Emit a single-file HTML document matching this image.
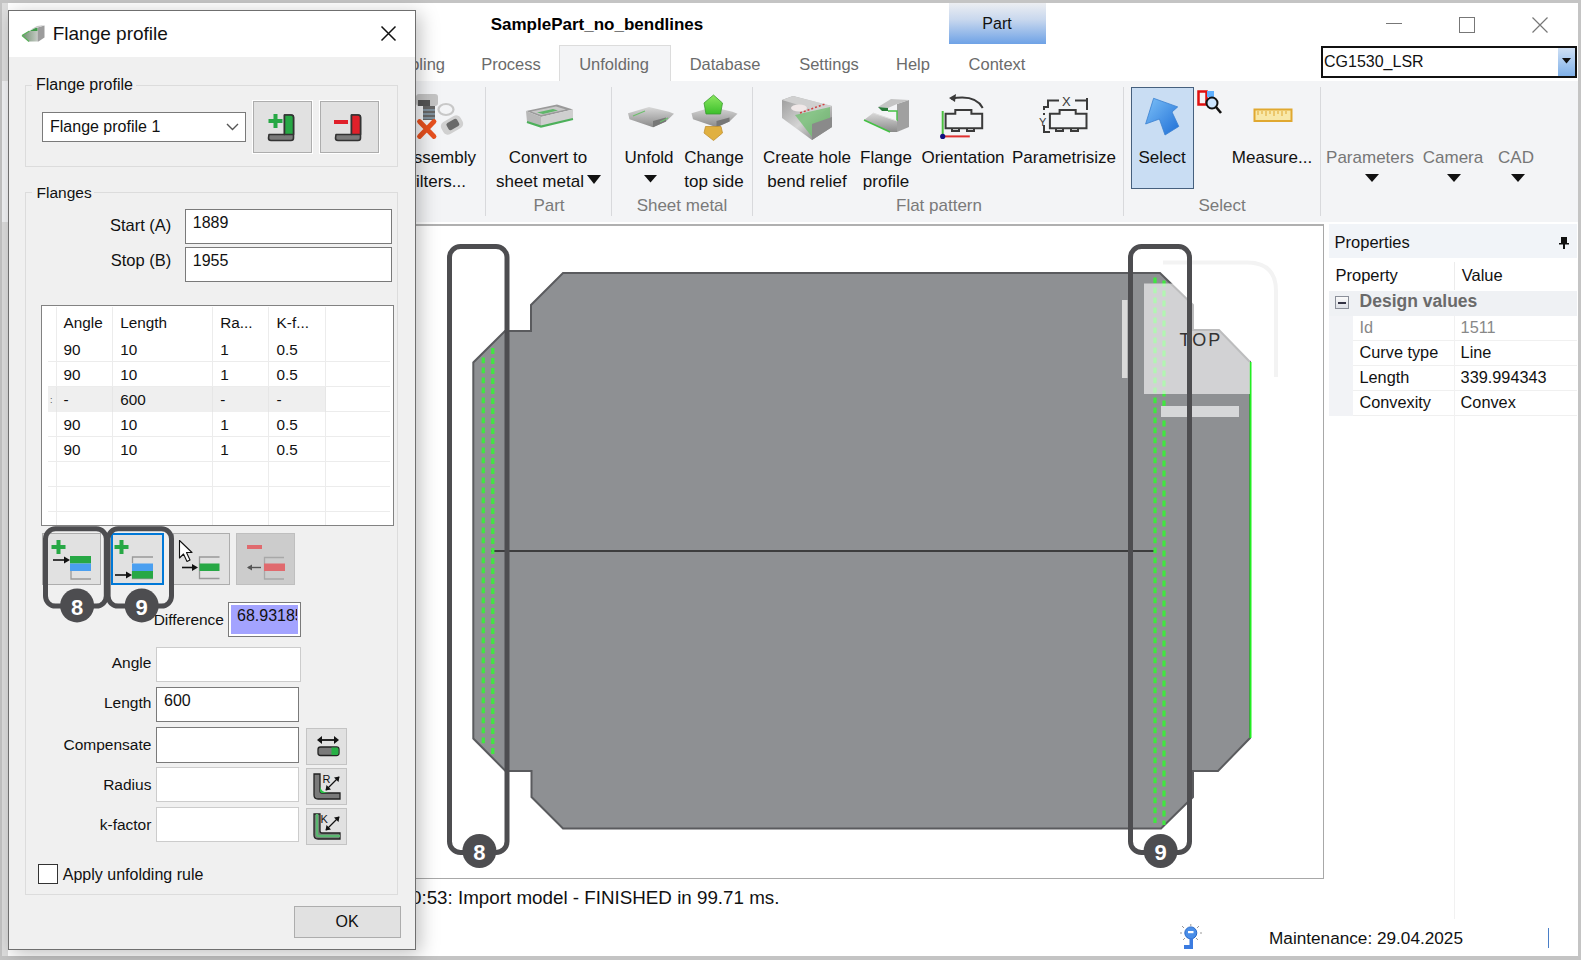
<!DOCTYPE html><html><head><meta charset="utf-8"><style>
html,body{margin:0;padding:0;}
body{width:1581px;height:960px;position:relative;overflow:hidden;background:#c4c4c4;font-family:"Liberation Sans",sans-serif;}
.t{position:absolute;line-height:1;white-space:pre;}
svg{position:absolute;overflow:visible;}
</style></head><body>

<div style="position:absolute;left:2px;top:3px;width:1576px;height:953px;background:#ffffff;"></div>
<div style="position:absolute;left:2px;top:3px;width:6px;height:953px;background:#dedede;"></div>
<div class="t" style="left:97px;width:1000px;text-align:center;top:15.55px;font-size:17px;color:#000;font-weight:bold;">SamplePart_no_bendlines</div>
<div style="position:absolute;left:949px;top:3px;width:97px;height:41px;background:linear-gradient(#eceef2,#c9d8ee 40%,#6ea2e6);"></div>
<div class="t" style="left:497px;width:1000px;text-align:center;top:15.80px;font-size:16px;color:#111;font-weight:normal;">Part</div>
<div style="position:absolute;left:1386px;top:23px;width:16px;height:1px;background:#777;"></div>
<div style="position:absolute;left:1459px;top:17px;width:14px;height:14px;border:1px solid #777;"></div>
<svg style="left:1532px;top:17px" width="16" height="16"><path d="M0.5 0.5L15.5 15.5M15.5 0.5L0.5 15.5" stroke="#777" stroke-width="1.2"/></svg>
<div style="position:absolute;left:2px;top:80.5px;width:1576px;height:1px;background:#dcdcdc;"></div>
<div style="position:absolute;left:559px;top:45px;width:112px;height:36px;background:#f3f4f6;border:1px solid #dcdcdc;border-bottom:none;box-sizing:border-box;"></div>
<div class="t" style="right:1136px;top:56.38px;font-size:16.5px;color:#6b6b6b;font-weight:normal;">Tooling</div>
<div class="t" style="left:11px;width:1000px;text-align:center;top:56.38px;font-size:16.5px;color:#6b6b6b;font-weight:normal;">Process</div>
<div class="t" style="left:114px;width:1000px;text-align:center;top:56.38px;font-size:16.5px;color:#6b6b6b;font-weight:normal;">Unfolding</div>
<div class="t" style="left:225px;width:1000px;text-align:center;top:56.38px;font-size:16.5px;color:#6b6b6b;font-weight:normal;">Database</div>
<div class="t" style="left:329px;width:1000px;text-align:center;top:56.38px;font-size:16.5px;color:#6b6b6b;font-weight:normal;">Settings</div>
<div class="t" style="left:413px;width:1000px;text-align:center;top:56.38px;font-size:16.5px;color:#6b6b6b;font-weight:normal;">Help</div>
<div class="t" style="left:497px;width:1000px;text-align:center;top:56.38px;font-size:16.5px;color:#6b6b6b;font-weight:normal;">Context</div>
<div style="position:absolute;left:1321px;top:46px;width:256px;height:32px;background:#fff;border:2px solid #111;box-sizing:border-box;"></div>
<div style="position:absolute;left:1558px;top:48px;width:17px;height:28px;background:linear-gradient(#cfe0f5,#7fb0e8);"></div>
<svg style="left:1562px;top:58px" width="9" height="6"><path d="M0 0H9L4.5 5.5Z" fill="#111"/></svg>
<div class="t" style="left:1324px;top:53.90px;font-size:16px;color:#111;font-weight:normal;">CG1530_LSR</div>
<div style="position:absolute;left:2px;top:81px;width:1576px;height:141px;background:#f3f4f6;"></div>
<div style="position:absolute;left:415px;top:223px;width:909px;height:1px;background:#ffffff;"></div>
<div style="position:absolute;left:485px;top:87px;width:1px;height:129px;background:#d8d9dc;"></div>
<div style="position:absolute;left:611px;top:87px;width:1px;height:129px;background:#d8d9dc;"></div>
<div style="position:absolute;left:752px;top:87px;width:1px;height:129px;background:#d8d9dc;"></div>
<div style="position:absolute;left:1123px;top:87px;width:1px;height:129px;background:#d8d9dc;"></div>
<div style="position:absolute;left:1320px;top:87px;width:1px;height:129px;background:#d8d9dc;"></div>
<div class="t" style="right:1105px;top:148.75px;font-size:17px;color:#111;font-weight:normal;">Assembly</div>
<div class="t" style="right:1115px;top:172.55px;font-size:17px;color:#111;font-weight:normal;">filters...</div>
<div class="t" style="left:48px;width:1000px;text-align:center;top:148.75px;font-size:17px;color:#111;font-weight:normal;">Convert to</div>
<div class="t" style="left:40px;width:1000px;text-align:center;top:172.55px;font-size:17px;color:#111;font-weight:normal;">sheet metal</div>
<svg style="left:587px;top:174.5px" width="14" height="9"><path d="M0 0H14L7 9Z" fill="#111"/></svg>
<div class="t" style="left:49px;width:1000px;text-align:center;top:196.55px;font-size:17px;color:#7a7a7a;font-weight:normal;">Part</div>
<div class="t" style="left:149px;width:1000px;text-align:center;top:148.75px;font-size:17px;color:#111;font-weight:normal;">Unfold</div>
<svg style="left:644px;top:175px" width="13" height="8"><path d="M0 0H13L6.5 7.5Z" fill="#111"/></svg>
<div class="t" style="left:214px;width:1000px;text-align:center;top:148.75px;font-size:17px;color:#111;font-weight:normal;">Change</div>
<div class="t" style="left:214px;width:1000px;text-align:center;top:172.55px;font-size:17px;color:#111;font-weight:normal;">top side</div>
<div class="t" style="left:182px;width:1000px;text-align:center;top:196.55px;font-size:17px;color:#7a7a7a;font-weight:normal;">Sheet metal</div>
<div class="t" style="left:307px;width:1000px;text-align:center;top:148.75px;font-size:17px;color:#111;font-weight:normal;">Create hole</div>
<div class="t" style="left:307px;width:1000px;text-align:center;top:172.55px;font-size:17px;color:#111;font-weight:normal;">bend relief</div>
<div class="t" style="left:386px;width:1000px;text-align:center;top:148.75px;font-size:17px;color:#111;font-weight:normal;">Flange</div>
<div class="t" style="left:386px;width:1000px;text-align:center;top:172.55px;font-size:17px;color:#111;font-weight:normal;">profile</div>
<div class="t" style="left:463px;width:1000px;text-align:center;top:148.75px;font-size:17px;color:#111;font-weight:normal;">Orientation</div>
<div class="t" style="left:564px;width:1000px;text-align:center;top:148.75px;font-size:17px;color:#111;font-weight:normal;">Parametrisize</div>
<div class="t" style="left:439px;width:1000px;text-align:center;top:196.55px;font-size:17px;color:#7a7a7a;font-weight:normal;">Flat pattern</div>
<div style="position:absolute;left:1131px;top:87px;width:63px;height:102px;background:#c9ddf3;border:1.5px solid #46607e;box-sizing:border-box;"></div>
<div class="t" style="left:662px;width:1000px;text-align:center;top:148.75px;font-size:17px;color:#111;font-weight:normal;">Select</div>
<div class="t" style="left:772px;width:1000px;text-align:center;top:148.75px;font-size:17px;color:#111;font-weight:normal;">Measure...</div>
<div class="t" style="left:722px;width:1000px;text-align:center;top:196.55px;font-size:17px;color:#7a7a7a;font-weight:normal;">Select</div>
<div class="t" style="left:870px;width:1000px;text-align:center;top:148.75px;font-size:17px;color:#777;font-weight:normal;">Parameters</div>
<div class="t" style="left:953px;width:1000px;text-align:center;top:148.75px;font-size:17px;color:#777;font-weight:normal;">Camera</div>
<div class="t" style="left:1016px;width:1000px;text-align:center;top:148.75px;font-size:17px;color:#777;font-weight:normal;">CAD</div>
<svg style="left:1365px;top:174px" width="14" height="9"><path d="M0 0H14L7 8Z" fill="#111"/></svg>
<svg style="left:1447px;top:174px" width="14" height="9"><path d="M0 0H14L7 8Z" fill="#111"/></svg>
<svg style="left:1511px;top:174px" width="14" height="9"><path d="M0 0H14L7 8Z" fill="#111"/></svg>
<div style="position:absolute;left:415px;top:224px;width:909px;height:655px;background:#fff;border:1px solid #a8a8a8;border-top:2px solid #b0b0b0;box-sizing:border-box;"></div>
<svg style="left:0;top:0" width="1581" height="960">
<path d="M563 273 H1160 L1193 305 V330 H1219 L1250 362 V738 L1218 771 H1193 V797 L1161 828.5 H563 L531.5 797 V771 H505.5 L473.3 738.5 V362.5 L505 331 H531 V305 Z" fill="#8e9093" stroke="#5a5b5e" stroke-width="2"/>
<line x1="491" y1="551" x2="1155.6" y2="551" stroke="#222" stroke-width="1.5"/>
<path d="M483.3 357.5 V745 M492.8 348.1 V754" stroke="#3fe83f" stroke-width="3.2" stroke-dasharray="5.8 4.2"/>
<path d="M1155 277.5 V823 M1164 280.6 V825" stroke="#3fe83f" stroke-width="3.2" stroke-dasharray="5.8 4.2"/>
<path d="M1250.5 362 V738" stroke="#22ee22" stroke-width="2"/>
<path d="M1163 262.5 H1247 Q1276 262.5 1276 291 V377" fill="none" stroke="#f3f3f3" stroke-width="4"/>
<rect x="1144" y="283.5" width="106" height="110.5" fill="#ffffff" fill-opacity="0.6"/>
<rect x="1122" y="300" width="5.5" height="78" fill="#dadada"/>
<rect x="1161" y="406" width="78" height="11" fill="#d6d7d9"/>
<text x="1179.5" y="345.5" font-family="Liberation Sans" font-size="18" fill="#333" letter-spacing="2">TOP</text>
<rect x="449.5" y="246.5" width="57.5" height="606" rx="11" fill="none" stroke="#4d4d50" stroke-width="5"/>
<rect x="1130.5" y="246.5" width="59" height="606" rx="11" fill="none" stroke="#4d4d50" stroke-width="5"/>
<circle cx="479.4" cy="851" r="17" fill="#4d4d50"/>
<circle cx="1160.6" cy="851" r="17" fill="#4d4d50"/>
<text x="479.4" y="860.3" text-anchor="middle" font-family="Liberation Sans" font-weight="bold" font-size="22" fill="#fff">8</text>
<text x="1160.6" y="860.3" text-anchor="middle" font-family="Liberation Sans" font-weight="bold" font-size="22" fill="#fff">9</text>
</svg>
<div style="position:absolute;left:1329px;top:224px;width:248px;height:34px;background:#f1f4f8;"></div>
<div class="t" style="left:1334.6px;top:234.07px;font-size:16.5px;color:#111;font-weight:normal;">Properties</div>
<svg style="left:1558px;top:236px" width="12" height="14"><path d="M3 1H9V7H11V8.5H7V13H5V8.5H1V7H3Z" fill="#111"/></svg>
<div style="position:absolute;left:1329px;top:258px;width:248px;height:33px;background:#fff;"></div>
<div style="position:absolute;left:1454px;top:262px;width:1px;height:28px;background:#ececec;"></div>
<div class="t" style="left:1335.5px;top:267.18px;font-size:16.5px;color:#111;font-weight:normal;">Property</div>
<div class="t" style="left:1461.7px;top:267.18px;font-size:16.5px;color:#111;font-weight:normal;">Value</div>
<div style="position:absolute;left:1329px;top:291px;width:248px;height:25px;background:#eff1f4;"></div>
<div style="position:absolute;left:1329px;top:316px;width:24px;height:100px;background:#f2f3f6;"></div>
<div style="position:absolute;left:1335px;top:296px;width:14px;height:13px;border:1px solid #8a8f99;box-sizing:border-box;background:linear-gradient(#fafafa,#dde0e6);"></div>
<div style="position:absolute;left:1338px;top:302px;width:8px;height:1.5px;background:#334;"></div>
<div class="t" style="left:1359.6px;top:293.12px;font-size:17.5px;color:#6a6a6a;font-weight:bold;">Design values</div>
<div style="position:absolute;left:1353px;top:340px;width:224px;height:1px;background:#f0f0f0;"></div>
<div class="t" style="left:1359.5px;top:318.64px;font-size:16.3px;color:#888;font-weight:normal;">Id</div>
<div class="t" style="left:1460.6px;top:318.64px;font-size:16.3px;color:#888;font-weight:normal;">1511</div>
<div style="position:absolute;left:1353px;top:365px;width:224px;height:1px;background:#f0f0f0;"></div>
<div class="t" style="left:1359.5px;top:343.64px;font-size:16.3px;color:#111;font-weight:normal;">Curve type</div>
<div class="t" style="left:1460.6px;top:343.64px;font-size:16.3px;color:#111;font-weight:normal;">Line</div>
<div style="position:absolute;left:1353px;top:390px;width:224px;height:1px;background:#f0f0f0;"></div>
<div class="t" style="left:1359.5px;top:368.64px;font-size:16.3px;color:#111;font-weight:normal;">Length</div>
<div class="t" style="left:1460.6px;top:368.64px;font-size:16.3px;color:#111;font-weight:normal;">339.994343</div>
<div style="position:absolute;left:1353px;top:415px;width:224px;height:1px;background:#f0f0f0;"></div>
<div class="t" style="left:1359.5px;top:393.64px;font-size:16.3px;color:#111;font-weight:normal;">Convexity</div>
<div class="t" style="left:1460.6px;top:393.64px;font-size:16.3px;color:#111;font-weight:normal;">Convex</div>
<div style="position:absolute;left:1454px;top:316px;width:1px;height:603px;background:#f1f1f1;"></div>
<svg style="left:0;top:0" width="1581" height="960">
<defs>
<linearGradient id="gmet" x1="0" y1="0" x2="0" y2="1"><stop offset="0" stop-color="#d8d8d8"/><stop offset="1" stop-color="#8a8a8a"/></linearGradient>
<linearGradient id="gmet2" x1="0" y1="0" x2="1" y2="1"><stop offset="0" stop-color="#9a9a9a"/><stop offset="0.5" stop-color="#d4d4d4"/><stop offset="1" stop-color="#6e6e6e"/></linearGradient>
<linearGradient id="gblue" x1="0" y1="0" x2="1" y2="1"><stop offset="0" stop-color="#7cc0f8"/><stop offset="1" stop-color="#1f6fd6"/></linearGradient>
<linearGradient id="ggreen" x1="0" y1="0" x2="0" y2="1"><stop offset="0" stop-color="#8ce860"/><stop offset="1" stop-color="#3cbf2c"/></linearGradient>
</defs>
<!-- assembly filters partial -->
<rect x="416" y="94" width="22" height="12" rx="3" fill="#c4c4c4"/>
<rect x="418" y="100" width="12" height="6" fill="#555"/>
<rect x="423" y="106" width="12" height="14" fill="#666"/>
<path d="M423 110H435 M423 114H435 M423 118H435" stroke="#8aa0b0" stroke-width="1.4"/>
<ellipse cx="446" cy="109.5" rx="7.5" ry="5.5" fill="none" stroke="#c8c8c8" stroke-width="2.2"/>
<g transform="rotate(-30 452 125)"><rect x="441" y="118" width="22" height="14" rx="5" fill="#d0d0d0"/><rect x="447" y="121" width="12" height="8" rx="2" fill="#6a6a6a"/></g>
<path d="M419.5 121.5L434 136.5M434 121.5L419.5 136.5" stroke="#e8501e" stroke-width="4.8" stroke-linecap="round"/>
<!-- convert to sheet metal -->
<path d="M526 111L557 104.5L573 109.5L541 117Z" fill="#9a9a9a"/>
<path d="M531 111.5L556 106.5L566 109.5L541 115Z" fill="#c8c8c8"/>
<path d="M537 112.5L553 109L558 110.5L543 114Z" fill="#5fb66a"/>
<path d="M526 111L541 117V126.5L527 122Z" fill="#b8b8b8"/>
<path d="M541 117L573 109.5V119L541 126.5Z" fill="#cfcfcf"/>
<path d="M527 122L541 126.5L573 119" stroke="#4cb05a" stroke-width="2.2" fill="none"/>
<!-- unfold -->
<path d="M628 113.3L649 107L669 111.7L674 113.7L666 121.6L653 127.2L629.5 119.2Z" fill="url(#gmet)"/>
<path d="M653 121L666 117.5V121.6L653 127.2Z" fill="#777"/>
<path d="M633 116L645 111M660 122L668 118" stroke="#6cbf6c" stroke-width="1.2"/>
<!-- change top side -->
<path d="M691.5 113.3L712.5 107L732.5 111.7L737.5 113.7L729.5 121.6L716.5 127.2L693 119.2Z" fill="url(#gmet)"/>
<path d="M716.5 121L729.5 117.5V121.6L716.5 127.2Z" fill="#777"/>
<path d="M713.5 95L722.5 103L720.5 114H706L704 103Z" fill="url(#ggreen)" stroke="#3a9a30" stroke-width="0.8" stroke-linejoin="round"/>
<path d="M705.5 126.5H721L722.5 133L713.5 140.5L704 133Z" fill="#e0b040" stroke="#c09030" stroke-width="0.8" stroke-linejoin="round"/>
<!-- create hole bend relief -->
<path d="M782 100L793 96L832 106V127L812 140L782 118Z" fill="url(#gmet2)"/>
<path d="M782 100L793 96L832 106L822 112Z" fill="#d0d0d0"/>
<path d="M795 115L830 107V126L812 137Z" fill="#6fbf6f" opacity="0.75"/>
<ellipse cx="799" cy="108" rx="8" ry="3.5" fill="#f0e8e8"/>
<path d="M800 113L825 104" stroke="#d04040" stroke-width="1.5" stroke-dasharray="2 2"/>
<path d="M812 124L832 117V127L812 140Z" fill="#8a8a8a"/>
<!-- flange profile -->
<path d="M864 120L873 113L897 121V132L890 132Z" fill="url(#gmet)"/>
<path d="M864 120L890 132" stroke="#44c044" stroke-width="1.6"/>
<path d="M897 121V104L909 100V127L897 132Z" fill="#a0a0a0"/>
<path d="M878 107L891 99L909 100L897 104L888 108Z" fill="#c4c4c4"/>
<path d="M878 107L888 108V111L882 111Z" fill="#2a7a3a"/>
<path d="M888 111H897V121" stroke="#44c044" stroke-width="1.4" fill="none"/>
<path d="M873 113L897 121" stroke="#ddd" stroke-width="1"/>
<!-- orientation -->
<g fill="none" stroke="#3a3a3a" stroke-width="2">
<path d="M945.6 113.8H955.3V110H971.4V113.8H982.2V128.3H945.6Z"/>
<path d="M952 128.3V131H959V128.3M967 128.3V131H974V128.3"/>
<path d="M982.7 107.9Q975 94 951 98.8"/>
</g>
<path d="M949 98L956 94L955 102Z" fill="#3a3a3a"/>
<path d="M942.7 111V136.4" stroke="#4cc040" stroke-width="2"/>
<path d="M943 136.4H969.8" stroke="#e03030" stroke-width="2"/>
<circle cx="942.7" cy="136.4" r="2.6" fill="#101080"/>
<!-- parametrisize -->
<g fill="none" stroke="#3a3a3a" stroke-width="2">
<path d="M1049.9 113.8H1059.6V110H1075.7V113.8H1086.5V128.3H1049.9Z"/>
<path d="M1056 128.3V131H1063V128.3M1071 128.3V131H1078V128.3"/>
<path d="M1044 110V107H1048V100.5H1059 M1075 100.5H1087 M1087 98V110"/>
<path d="M1044 113V115 M1044 125V132H1050"/>
</g>
<text x="1062" y="106" font-family="Liberation Sans" font-size="13" fill="#3a3a3a">X</text>
<text x="1039" y="126" font-family="Liberation Sans" font-size="11" fill="#3a3a3a">Y</text>
<!-- select arrow -->
<path d="M1153.6 98.3L1177.7 106.9L1172 112L1178.8 126.4L1165 135L1159.4 119L1145.6 124Z" fill="url(#gblue)" stroke="#3a80d0" stroke-width="0.8" stroke-linejoin="round"/>
<!-- zoom icon -->
<rect x="1198.5" y="91.5" width="8" height="13" fill="none" stroke="#e01010" stroke-width="2.5"/>
<rect x="1207" y="91" width="7" height="6" fill="#60b0ff"/>
<circle cx="1212" cy="103" r="5.5" fill="#cde6ff" stroke="#111" stroke-width="2"/>
<path d="M1216 107L1221 113" stroke="#111" stroke-width="2.6"/>
<!-- ruler -->
<rect x="1254.5" y="109.5" width="37" height="11.5" fill="#f8e8a8" stroke="#e0a830" stroke-width="2"/>
<path d="M1258 111V115M1262 111V114M1266 111V116M1270 111V114M1274 111V116M1278 111V114M1282 111V116M1286 111V114" stroke="#e0a830" stroke-width="1"/>
<!-- key status icon -->
<circle cx="1190.8" cy="932.9" r="6" fill="#4a8ee8" stroke="#2a6ac8" stroke-width="1"/>
<rect x="1188" y="931" width="5.5" height="2.2" fill="#fff"/>
<path d="M1189.5 938H1193V949H1184V945H1189.5Z" fill="#3b7be0"/>
<path d="M1182 926L1184 928M1190.8 924V926M1199 926L1197 928M1180 933H1182M1200 933H1202M1183 940L1185 938M1198 940L1196 938" stroke="#999" stroke-width="1"/>
</svg>
<div class="t" style="left:411px;top:889.32px;font-size:18.8px;color:#111;font-weight:normal;">0:53: Import model - FINISHED in 99.71 ms.</div>
<div class="t" style="left:1269px;top:930.38px;font-size:17.2px;color:#111;font-weight:normal;">Maintenance: 29.04.2025</div>
<div style="position:absolute;left:1548px;top:928px;width:1px;height:20px;background:#4a7fc8;"></div>
<div style="position:absolute;left:8px;top:10px;width:408px;height:940px;box-shadow:4px 4px 18px rgba(0,0,0,0.25);"></div>
<div style="position:absolute;left:8px;top:10px;width:408px;height:940px;background:#f0f0f0;border:1px solid #6f6f6f;box-sizing:border-box;"></div>
<div style="position:absolute;left:9px;top:11px;width:406px;height:46px;background:#fff;"></div>
<div class="t" style="left:52.7px;top:24.15px;font-size:19px;color:#111;font-weight:normal;">Flange profile</div>
<svg style="left:381px;top:26px" width="15" height="15"><path d="M0.5 0.5L14.5 14.5M14.5 0.5L0.5 14.5" stroke="#111" stroke-width="1.5"/></svg>
<div style="position:absolute;left:25px;top:85px;width:373px;height:82px;border:1px solid #dcdcdc;box-sizing:border-box;"></div>
<div style="position:absolute;left:32px;top:76px;width:104px;height:16px;background:#f0f0f0;"></div>
<div class="t" style="left:36px;top:76.90px;font-size:16px;color:#111;font-weight:normal;">Flange profile</div>
<div style="position:absolute;left:42px;top:112px;width:204px;height:30px;background:#fff;border:1px solid #7a7a7a;box-sizing:border-box;"></div>
<div class="t" style="left:50px;top:119.00px;font-size:16px;color:#111;font-weight:normal;">Flange profile 1</div>
<svg style="left:226px;top:123px" width="13" height="8"><path d="M1 1L6.5 6.5L12 1" stroke="#555" stroke-width="1.4" fill="none"/></svg>
<div style="position:absolute;left:253px;top:101px;width:59px;height:52px;background:#e1e1e1;border:1px solid #adadad;box-sizing:border-box;box-shadow:0 0 0 1px #fff;"></div>
<div style="position:absolute;left:320px;top:101px;width:59px;height:52px;background:#e1e1e1;border:1px solid #adadad;box-sizing:border-box;box-shadow:0 0 0 1px #fff;"></div>
<div style="position:absolute;left:25px;top:192px;width:373px;height:703px;border:1px solid #dcdcdc;box-sizing:border-box;"></div>
<div style="position:absolute;left:32px;top:183px;width:62px;height:16px;background:#f0f0f0;"></div>
<div class="t" style="left:36.5px;top:184.52px;font-size:15.5px;color:#111;font-weight:normal;">Flanges</div>
<div class="t" style="right:1409.7px;top:216.57px;font-size:16.5px;color:#111;font-weight:normal;">Start (A)</div>
<div style="position:absolute;left:185px;top:209px;width:207px;height:35px;background:#fff;border:1px solid #7a7a7a;box-sizing:border-box;"></div>
<div class="t" style="left:192.8px;top:215.10px;font-size:16px;color:#111;font-weight:normal;">1889</div>
<div class="t" style="right:1409.7px;top:251.97px;font-size:16.5px;color:#111;font-weight:normal;">Stop (B)</div>
<div style="position:absolute;left:185px;top:247px;width:207px;height:35px;background:#fff;border:1px solid #7a7a7a;box-sizing:border-box;"></div>
<div class="t" style="left:192.8px;top:252.90px;font-size:16px;color:#111;font-weight:normal;">1955</div>
<div style="position:absolute;left:41px;top:305px;width:353px;height:221px;background:#fff;border:1px solid #828282;box-sizing:border-box;"></div>
<div style="position:absolute;left:56px;top:307px;width:1px;height:218px;background:#ececec;"></div>
<div style="position:absolute;left:112px;top:307px;width:1px;height:218px;background:#ececec;"></div>
<div style="position:absolute;left:212px;top:307px;width:1px;height:218px;background:#ececec;"></div>
<div style="position:absolute;left:268px;top:307px;width:1px;height:218px;background:#ececec;"></div>
<div style="position:absolute;left:325px;top:307px;width:1px;height:218px;background:#ececec;"></div>
<div style="position:absolute;left:41px;top:305px;width:353px;height:221px;border:1px solid #828282;box-sizing:border-box;"></div>
<div style="position:absolute;left:48px;top:361px;width:342px;height:1px;background:#ececec;"></div>
<div style="position:absolute;left:48px;top:386px;width:342px;height:1px;background:#ececec;"></div>
<div style="position:absolute;left:48px;top:411px;width:342px;height:1px;background:#ececec;"></div>
<div style="position:absolute;left:48px;top:436px;width:342px;height:1px;background:#ececec;"></div>
<div style="position:absolute;left:48px;top:461px;width:342px;height:1px;background:#ececec;"></div>
<div style="position:absolute;left:48px;top:486px;width:342px;height:1px;background:#ececec;"></div>
<div style="position:absolute;left:48px;top:511px;width:342px;height:1px;background:#ececec;"></div>
<div style="position:absolute;left:48px;top:387px;width:277px;height:25px;background:#efefef;"></div>
<div style="position:absolute;left:56px;top:387px;width:1px;height:25px;background:#e6e6e6;"></div>
<div style="position:absolute;left:112px;top:387px;width:1px;height:25px;background:#e6e6e6;"></div>
<div style="position:absolute;left:212px;top:387px;width:1px;height:25px;background:#e6e6e6;"></div>
<div style="position:absolute;left:268px;top:387px;width:1px;height:25px;background:#e6e6e6;"></div>
<div style="position:absolute;left:325px;top:387px;width:1px;height:25px;background:#e6e6e6;"></div>
<div class="t" style="left:63.6px;top:314.60px;font-size:15.3px;color:#111;font-weight:normal;">Angle</div>
<div class="t" style="left:120.2px;top:314.60px;font-size:15.3px;color:#111;font-weight:normal;">Length</div>
<div class="t" style="left:220.3px;top:314.60px;font-size:15.3px;color:#111;font-weight:normal;">Ra...</div>
<div class="t" style="left:276.6px;top:314.60px;font-size:15.3px;color:#111;font-weight:normal;">K-f...</div>
<div class="t" style="left:63.6px;top:342.39px;font-size:15.3px;color:#111;font-weight:normal;">90</div>
<div class="t" style="left:120.2px;top:342.39px;font-size:15.3px;color:#111;font-weight:normal;">10</div>
<div class="t" style="left:220.3px;top:342.39px;font-size:15.3px;color:#111;font-weight:normal;">1</div>
<div class="t" style="left:276.6px;top:342.39px;font-size:15.3px;color:#111;font-weight:normal;">0.5</div>
<div class="t" style="left:63.6px;top:367.39px;font-size:15.3px;color:#111;font-weight:normal;">90</div>
<div class="t" style="left:120.2px;top:367.39px;font-size:15.3px;color:#111;font-weight:normal;">10</div>
<div class="t" style="left:220.3px;top:367.39px;font-size:15.3px;color:#111;font-weight:normal;">1</div>
<div class="t" style="left:276.6px;top:367.39px;font-size:15.3px;color:#111;font-weight:normal;">0.5</div>
<div class="t" style="left:63.6px;top:392.39px;font-size:15.3px;color:#111;font-weight:normal;">-</div>
<div class="t" style="left:120.2px;top:392.39px;font-size:15.3px;color:#111;font-weight:normal;">600</div>
<div class="t" style="left:220.3px;top:392.39px;font-size:15.3px;color:#111;font-weight:normal;">-</div>
<div class="t" style="left:276.6px;top:392.39px;font-size:15.3px;color:#111;font-weight:normal;">-</div>
<div class="t" style="left:63.6px;top:417.39px;font-size:15.3px;color:#111;font-weight:normal;">90</div>
<div class="t" style="left:120.2px;top:417.39px;font-size:15.3px;color:#111;font-weight:normal;">10</div>
<div class="t" style="left:220.3px;top:417.39px;font-size:15.3px;color:#111;font-weight:normal;">1</div>
<div class="t" style="left:276.6px;top:417.39px;font-size:15.3px;color:#111;font-weight:normal;">0.5</div>
<div class="t" style="left:63.6px;top:442.39px;font-size:15.3px;color:#111;font-weight:normal;">90</div>
<div class="t" style="left:120.2px;top:442.39px;font-size:15.3px;color:#111;font-weight:normal;">10</div>
<div class="t" style="left:220.3px;top:442.39px;font-size:15.3px;color:#111;font-weight:normal;">1</div>
<div class="t" style="left:276.6px;top:442.39px;font-size:15.3px;color:#111;font-weight:normal;">0.5</div>
<div class="t" style="left:50px;top:396.35px;font-size:9px;color:#555;font-weight:normal;">:</div>
<div style="position:absolute;left:42px;top:533px;width:59px;height:52px;background:#e1e1e1;border:1px solid #adadad;box-sizing:border-box;"></div>
<div style="position:absolute;left:111px;top:533px;width:53px;height:52px;background:#e1e1e1;border:1px solid #0078d7;box-sizing:border-box;"></div>
<div style="position:absolute;left:111px;top:533px;width:53px;height:52px;border:2px solid #0078d7;box-sizing:border-box;"></div>
<div style="position:absolute;left:173px;top:533px;width:57px;height:52px;background:#e1e1e1;border:1px solid #adadad;box-sizing:border-box;"></div>
<div style="position:absolute;left:236px;top:533px;width:59px;height:52px;background:#cccccc;border:1px solid #bfbfbf;box-sizing:border-box;"></div>
<div class="t" style="right:1357px;top:611.83px;font-size:15.5px;color:#111;font-weight:normal;">Difference</div>
<div style="position:absolute;left:228px;top:602px;width:73px;height:35px;background:#a3a3ff;border:1px solid #7a7a7a;box-sizing:border-box;box-shadow:inset 0 0 0 2px #fff;"></div>
<div style="position:absolute;left:231px;top:605px;width:66px;height:29px;overflow:hidden;"><div class="t" style="left:6px;top:2.70px;font-size:16px;color:#111">68.93185</div></div>
<div class="t" style="right:1429.6px;top:654.62px;font-size:15.5px;color:#111;font-weight:normal;">Angle</div>
<div style="position:absolute;left:156px;top:647px;width:145px;height:35px;background:#fff;border:1px solid #cccccc;box-sizing:border-box;"></div>
<div class="t" style="right:1429.6px;top:694.53px;font-size:15.5px;color:#111;font-weight:normal;">Length</div>
<div style="position:absolute;left:156px;top:687px;width:143px;height:35px;background:#fff;border:1px solid #7a7a7a;box-sizing:border-box;"></div>
<div class="t" style="left:164px;top:692.90px;font-size:16px;color:#111;font-weight:normal;">600</div>
<div class="t" style="right:1429.6px;top:736.83px;font-size:15.5px;color:#111;font-weight:normal;">Compensate</div>
<div style="position:absolute;left:156px;top:727px;width:143px;height:36px;background:#fff;border:1px solid #7a7a7a;box-sizing:border-box;"></div>
<div style="position:absolute;left:306px;top:728px;width:41px;height:37px;background:#e1e1e1;border:1px solid #c4c4c4;box-sizing:border-box;"></div>
<div class="t" style="right:1429.6px;top:777.23px;font-size:15.5px;color:#111;font-weight:normal;">Radius</div>
<div style="position:absolute;left:156px;top:767px;width:143px;height:35px;background:#fff;border:1px solid #cccccc;box-sizing:border-box;"></div>
<div style="position:absolute;left:306px;top:768px;width:41px;height:37px;background:#e1e1e1;border:1px solid #c4c4c4;box-sizing:border-box;"></div>
<div class="t" style="right:1429.6px;top:817.12px;font-size:15.5px;color:#111;font-weight:normal;">k-factor</div>
<div style="position:absolute;left:156px;top:807px;width:143px;height:35px;background:#fff;border:1px solid #cccccc;box-sizing:border-box;"></div>
<div style="position:absolute;left:306px;top:808px;width:41px;height:37px;background:#e1e1e1;border:1px solid #c4c4c4;box-sizing:border-box;"></div>
<div style="position:absolute;left:38px;top:864px;width:20px;height:20px;background:#fff;border:1px solid #333;box-sizing:border-box;"></div>
<div class="t" style="left:62.8px;top:866.90px;font-size:16px;color:#111;font-weight:normal;">Apply unfolding rule</div>
<div style="position:absolute;left:294px;top:906px;width:107px;height:32px;background:#e1e1e1;border:1px solid #adadad;box-sizing:border-box;"></div>
<div class="t" style="left:-153px;width:1000px;text-align:center;top:914.10px;font-size:16px;color:#111;font-weight:normal;">OK</div>
<svg style="left:253px;top:101px" width="59" height="52">
<path d="M15.5 20H29.5 M22.5 13V27" stroke="#27a845" stroke-width="4"/>
<path d="M16 33.5 H31.5 V14 H38 Q40.5 14 40.5 16.5 V37 Q40.5 39.5 38 39.5 H18 Q15.5 39.5 15.5 37 Z" fill="#7a7a7a" stroke="#333" stroke-width="1.6" stroke-linejoin="round"/>
<path d="M31.5 14 H38 Q40.5 14 40.5 16.5 V33.5 H31.5 Z" fill="#27a845" stroke="#333" stroke-width="1.6" stroke-linejoin="round"/>
</svg>
<svg style="left:320px;top:101px" width="59" height="52">
<path d="M14 21H28" stroke="#e0202a" stroke-width="4"/>
<path d="M16 33.5 H31.5 V14 H38 Q40.5 14 40.5 16.5 V37 Q40.5 39.5 38 39.5 H18 Q15.5 39.5 15.5 37 Z" fill="#7a7a7a" stroke="#333" stroke-width="1.6" stroke-linejoin="round"/>
<path d="M31.5 14 H38 Q40.5 14 40.5 16.5 V33.5 H31.5 Z" fill="#e0202a" stroke="#333" stroke-width="1.6" stroke-linejoin="round"/>
</svg>
<svg style="left:42px;top:533px" width="59" height="52">
<path d="M9.5 14H23.5 M16.5 7V21" stroke="#27a845" stroke-width="4"/>
<path d="M11 27H24" stroke="#111" stroke-width="1.6"/><path d="M22 23.5L28 27L22 30.5Z" fill="#111"/>
<rect x="28" y="23" width="21" height="7.5" fill="#27a845"/>
<rect x="28" y="30.5" width="21" height="7.5" fill="#4a9ff0"/>
<path d="M49 46H29V38" stroke="#999" stroke-width="1.3" fill="none"/>
</svg>
<svg style="left:111px;top:533px" width="53" height="52">
<path d="M3.5 14H17.5 M10.5 7V21" stroke="#27a845" stroke-width="4"/>
<path d="M42 24H21.5V30 M21.5 38V45.5H42" stroke="#999" stroke-width="1.3" fill="none"/>
<rect x="21" y="30.5" width="21" height="7.5" fill="#4a9ff0"/>
<rect x="21" y="38" width="21" height="7.5" fill="#27a845"/>
<path d="M4 42H17" stroke="#111" stroke-width="1.6"/><path d="M15 38.5L21 42L15 45.5Z" fill="#111"/>
</svg>
<svg style="left:173px;top:533px" width="57" height="52">
<path d="M46.5 24H26.5V45.5H46.5" stroke="#999" stroke-width="1.3" fill="none"/>
<rect x="26.5" y="30.5" width="20" height="7.5" fill="#27a845"/>
<path d="M9 34.5H21" stroke="#111" stroke-width="1.6"/><path d="M19 31L25 34.5L19 38Z" fill="#111"/>
</svg>
<svg style="left:236px;top:533px" width="59" height="52">
<rect x="11" y="12" width="15" height="4" fill="#e06a6e"/>
<path d="M48 24.5H28.5V46H48" stroke="#a8a8a8" stroke-width="1.3" fill="none"/>
<rect x="28" y="30.5" width="21" height="7.5" fill="#e06a6e"/>
<path d="M12 34.5H25" stroke="#555" stroke-width="1.4"/><path d="M16 31.5L11 34.5L16 37.5Z" fill="#555"/>
</svg>
<svg style="left:306px;top:728px" width="41" height="37">
<path d="M15 12H29" stroke="#111" stroke-width="1.8"/><path d="M16 8L11 12L16 16Z M28 8L33 12L28 16Z" fill="#111"/>
<rect x="12" y="19" width="21" height="8.5" rx="2.5" fill="#7a7a7a" stroke="#222" stroke-width="1.3"/>
<path d="M25.5 19.6H31 Q32.4 19.6 32.4 21V25.6 Q32.4 27 31 27H25.5Z" fill="#27b045"/>
</svg>
<svg style="left:306px;top:768px" width="41" height="37">
<path d="M8 6V27 Q8 31 12 31H34V25H16 Q14 25 14 23V6Z" fill="#7a7a7a" stroke="#222" stroke-width="1.3"/>
<path d="M14 18 Q15 25 23 25H16Q14 25 14 23Z" fill="#27c045"/>
<text x="16.5" y="15" font-family="Liberation Sans" font-size="11" fill="#111">R</text>
<path d="M20 22L33 9" stroke="#111" stroke-width="1.3"/><path d="M33.5 8.5L28 9.5L32.5 14Z M19.5 22.5L25 21.5L20.5 17Z" fill="#111"/>
</svg>
<svg style="left:306px;top:808px" width="41" height="37">
<path d="M8 6V27 Q8 31 12 31H34V25H16 Q14 25 14 23V6Z" fill="#7a7a7a" stroke="#222" stroke-width="1.3"/>
<path d="M11 6V26 Q11 28 13 28H34" stroke="#5ab870" stroke-width="2.4" fill="none"/>
<text x="14.5" y="15" font-family="Liberation Sans" font-size="11" fill="#111">K</text>
<path d="M20 22L33 9" stroke="#111" stroke-width="1.3"/><path d="M33.5 8.5L28 9.5L32.5 14Z M19.5 22.5L25 21.5L20.5 17Z" fill="#111"/>
</svg>
<svg style="left:0;top:0" width="420" height="960">
<rect x="45.5" y="528.8" width="60.8" height="77.3" rx="10" fill="none" stroke="#4d4d50" stroke-width="5"/>
<rect x="108.1" y="528.8" width="63.4" height="77.3" rx="10" fill="none" stroke="#4d4d50" stroke-width="5"/>
<circle cx="77.1" cy="605.4" r="17" fill="#4d4d50"/>
<circle cx="141.7" cy="605.4" r="17" fill="#4d4d50"/>
<text x="77.1" y="615" text-anchor="middle" font-family="Liberation Sans" font-weight="bold" font-size="22" fill="#fff">8</text>
<text x="141.7" y="615" text-anchor="middle" font-family="Liberation Sans" font-weight="bold" font-size="22" fill="#fff">9</text>
<path d="M179.5 540.5 V558 L183.5 554 L187 561.5 L190 560 L186.5 552.5 H192 Z" fill="#fff" stroke="#111" stroke-width="1.1" stroke-linejoin="round"/>
</svg>
<svg style="left:0;top:0" width="60" height="60">
<defs><linearGradient id="tip" x1="0" y1="0" x2="1" y2="0"><stop offset="0" stop-color="#6f8f6f"/><stop offset="1" stop-color="#c4cac4"/></linearGradient></defs>
<path d="M22 35.5 L29.5 31 H37.5 V41.5 H29 Z" fill="url(#tip)"/>
<path d="M22 35.5 L29.5 31 M29 41.5 L22 35.5" stroke="#58b058" stroke-width="1.2" fill="none"/>
<path d="M37.5 31 V27.5 L44.5 25.5 V37.5 L38.5 41.5 H37.5Z" fill="#9c9c9c"/>
<path d="M30 30 L37 26 L44.5 25 L38 27.5 Z" fill="#c6c6c6"/>
<path d="M30.5 30.5 L35.5 28 H37.5 V31 H30Z" fill="#3f9a4a"/>
</svg>
</body></html>
